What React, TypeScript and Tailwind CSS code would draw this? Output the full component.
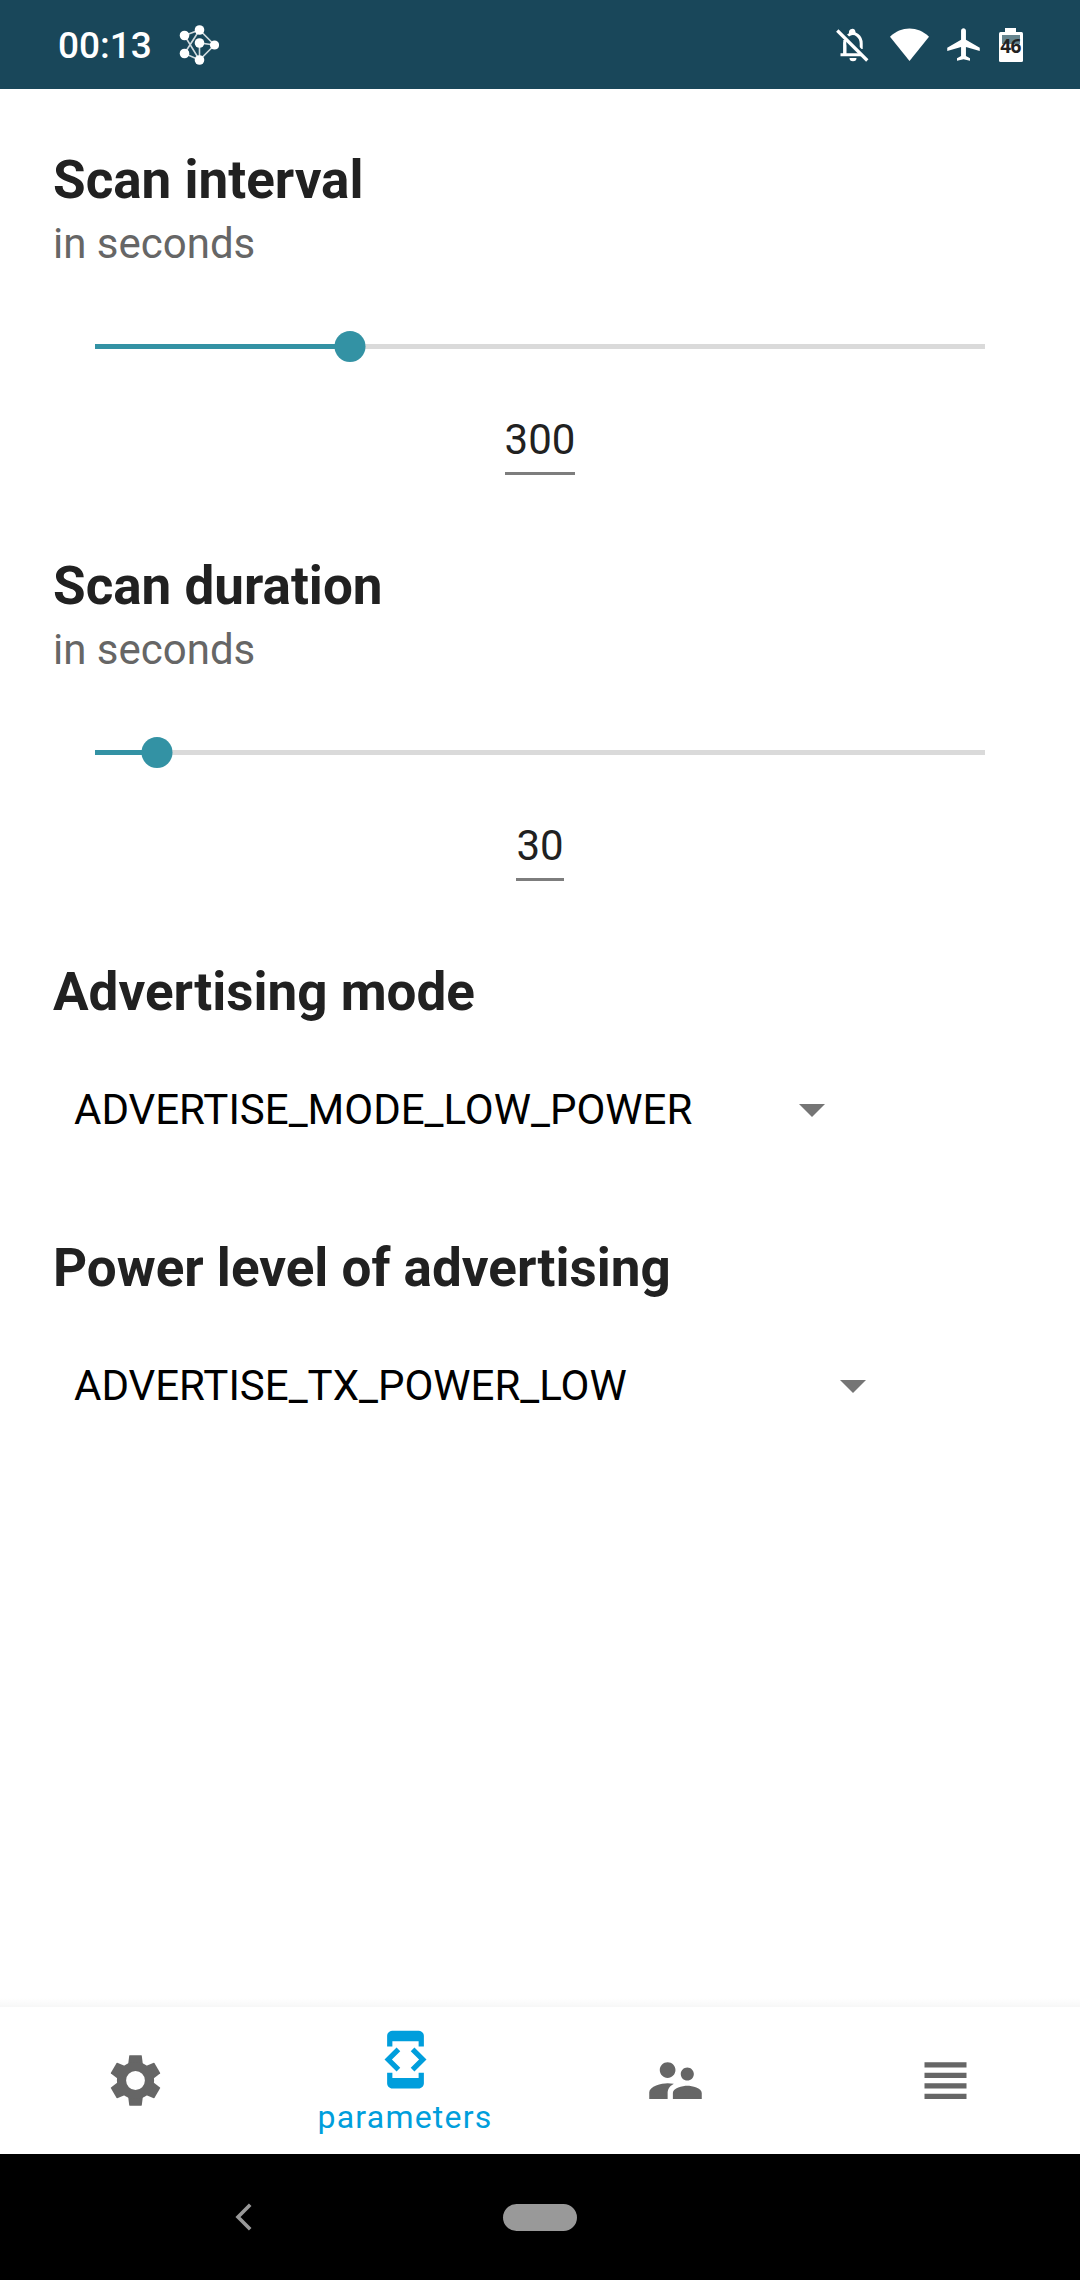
import React from "react";

function NetworkIcon() {
  return (
    <svg className="ml-[27px] h-[40px] w-[40px]" viewBox="0 0 40 40">
      <path
        d="M5.5 10.5 20.5 5 35.5 20 20.5 35 5.5 28.500 20.5 5M5.500 10.500 20.500 35V18L35.500 20"
        stroke="white"
        strokeOpacity="0.8"
        strokeWidth="1.6"
        fill="none"
      />
      <g fill="white">
        <circle cx="20.500" cy="5" r="4.800" />
        <circle cx="5.500" cy="10.500" r="4.800" />
        <circle cx="20.500" cy="18" r="4.800" />
        <circle cx="35.500" cy="20" r="4.600" />
        <circle cx="5.500" cy="28.500" r="4.800" />
        <circle cx="20.500" cy="35" r="4.800" />
      </g>
    </svg>
  );
}

function StatusBar() {
  return (
    <header className="flex h-[89px] shrink-0 items-center bg-[#19475a] pl-[58px] pr-[57px] text-white">
      <span className="pt-[2px] text-[37px] font-medium leading-none">00:13</span>
      <NetworkIcon />
      <div className="ml-auto flex h-[36px] items-center">
        <svg className="h-[36px] w-[36px]" viewBox="0 0 36 36" fill="none" stroke="white">
          <path d="M10.800 28V16.500C10.800 12.500 12.500 9 15.500 7.500C21 4.500 27.200 9.500 27.200 16.500V22" strokeWidth="3" />
          <path d="M3.500 3.500 33 33" stroke="#19475a" strokeWidth="8" />
          <path d="M10.800 13V27.500M6.500 27.800H27" strokeWidth="3" />
          <path d="M3.300 3.500 33.300 33.500" strokeWidth="3.300" />
          <path d="M15.500 31H22.500A3.500 3.300 0 0 1 15.500 31ZM15 6.500A3 3.500 0 0 1 21.500 5V7Z" fill="white" stroke="none" />
        </svg>
        <svg className="ml-[20px] h-[36px] w-[39px]" viewBox="0 0 39 36">
          <path d="M0 9.800C11 -1.300 28 -1.300 39 9.800L19.500 34Z" fill="white" />
        </svg>
        <svg className="ml-[15px] h-[39px] w-[39px]" viewBox="0 0 24 24">
          <path d="M22 16v-2l-8.500-5V3.500c0-.83-.67-1.500-1.500-1.500s-1.500.67-1.500 1.500V9L2 14v2l8.500-2.500V19L8 20.500V22l4-1 4 1v-1.500L13.500 19v-5.500L22 16z" fill="white" />
        </svg>
        <div className="ml-[15px] flex h-[34px] w-[25px] flex-col items-center">
          <div className="h-[4px] w-[11px] bg-white" />
          <div className="relative h-[30px] w-[24px] rounded-[1.500px] bg-white px-[3px] pt-[3px]">
            <div className="h-[9px] bg-[#66858f]" />
            <span className="absolute left-0 top-[4px] w-full text-center font-['Noto_Sans'] text-[19px] font-bold leading-[20px] tracking-[-0.500px] text-[#222222]">
              46
            </span>
          </div>
        </div>
      </div>
    </header>
  );
}

function Title({ children }: { children: string }) {
  return <h2 className="text-[53px] font-bold leading-[62px] text-[#212121]">{children}</h2>;
}

function SliderSection({ title, value, percent }: { title: string; value: string; percent: number }) {
  return (
    <section className="flex h-[406px] flex-col">
      <Title>{title}</Title>
      <p className="mt-[8px] text-[42px] leading-[50px] text-[#666666]">in seconds</p>
      <div className="relative mx-[42px] mt-[75px] h-[5px] bg-[#dadada]">
        <div className="h-full bg-[#3392a4]" style={{ width: `${percent}%` }} />
        <div
          className="absolute -top-[13px] h-[31px] w-[31px] -translate-x-1/2 rounded-full bg-[#3392a4]"
          style={{ left: `${percent}%` }}
        />
      </div>
      <div className="mt-[66px] h-[60px] self-center border-b-[3px] border-[#7d7d7d] text-[42px] leading-[50px] text-[#212121]">
        {value}
      </div>
    </section>
  );
}

function SelectSection({ title, value, gapClass }: { title: string; value: string; gapClass: string }) {
  return (
    <section className="h-[276px]">
      <Title>{title}</Title>
      <div className={`mt-[61px] flex h-[52px] items-center pl-[21px] ${gapClass}`}>
        <span className="whitespace-nowrap text-[42px] leading-[50px] text-black">{value}</span>
        <svg className="h-[13px] w-[26px]" viewBox="0 0 26 13">
          <path d="M0 0h26L13 13z" fill="#757575" />
        </svg>
      </div>
    </section>
  );
}

const TEETH = [0, 60, 120, 180, 240, 300];

function GearIcon() {
  return (
    <svg className="h-[63px] w-[63px]" viewBox="-31.500 -31.500 63 63">
      {TEETH.map((angle) => (
        <path key={angle} d="M-5.800 -25.200H5.800L6.300 -24.700 7.500 -15H-7.500L-6.300 -24.700Z" fill="#666666" transform={`rotate(${angle})`} />
      ))}
      <circle r="14" fill="none" stroke="#666666" strokeWidth="9.200" />
    </svg>
  );
}

function BottomNav() {
  return (
    <nav className="grid h-[147px] shrink-0 grid-cols-4 bg-white">
      <div className="flex items-center justify-center">
        <GearIcon />
      </div>
      <div className="flex flex-col items-center pt-[21px] text-[#009edc]">
        <svg className="h-[63px] w-[63px]" viewBox="0 0 24 24" fill="currentColor">
          <path d="M7 5h10v2h2V3c0-1.100-.9-1.990-2-1.990L7 1c-1.100 0-2 .9-2 2v4h2V5zm8.410 11.590L20 12l-4.590-4.590L14 8.830 17.170 12 14 15.170l1.410 1.420zM10 15.170L6.830 12 10 8.830 8.590 7.410 4 12l4.590 4.590L10 15.170zM17 19H7v-2H5v4c0 1.100.9 2 2 2h10c1.100 0 2-.9 2-2v-4h-2v2z" />
        </svg>
        <span className="mt-[7px] text-[32px] leading-[38px] tracking-[1.200px]">parameters</span>
      </div>
      <div className="flex items-center justify-center text-[#666666]">
        <svg className="h-[63px] w-[63px]" viewBox="0 0 24 24" fill="currentColor">
          <path d="M16.500 12c1.380 0 2.490-1.120 2.490-2.500S17.880 7 16.500 7C15.120 7 14 8.120 14 9.500s1.120 2.500 2.500 2.500zM9 11c1.660 0 2.990-1.340 2.990-3S10.660 5 9 5C7.340 5 6 6.340 6 8s1.340 3 3 3zm7.500 3c-1.830 0-5.500.92-5.500 2.750V19h11v-2.250c0-1.830-3.670-2.750-5.500-2.750zM9 13c-2.330 0-7 1.170-7 3.500V19h7v-2.250c0-.85.33-2.340 2.370-3.470C10.500 13.100 9.660 13 9 13z" />
        </svg>
      </div>
      <div className="flex items-center justify-center text-[#666666]">
        <svg className="h-[63px] w-[63px]" viewBox="0 0 24 24" fill="currentColor">
          <path d="M4 15h16v-2H4v2zm0 4h16v-2H4v2zm0-8h16V9H4v2zm0-6v2h16V5H4z" />
        </svg>
      </div>
    </nav>
  );
}

function SystemBar() {
  return (
    <footer className="flex h-[126px] shrink-0 items-center bg-black pl-[235px]">
      <svg className="h-[28px] w-[18px]" viewBox="0 0 18 28" fill="none" stroke="#999999" strokeWidth="3.600">
        <path d="M15.200 1.800 3 14 15.200 26.200" />
      </svg>
      <div className="ml-[250px] h-[27px] w-[74px] rounded-full bg-[#999999]" />
    </footer>
  );
}

export default function App() {
  return (
    <div className="flex h-[2280px] w-[1080px] flex-col bg-white font-['Roboto',sans-serif]">
      <StatusBar />
      <main className="flex-1 px-[53px] pt-[60px]">
        <SliderSection title="Scan interval" value="300" percent={28.6} />
        <SliderSection title="Scan duration" value="30" percent={7} />
        <SelectSection title="Advertising mode" value="ADVERTISE_MODE_LOW_POWER" gapClass="gap-[107px]" />
        <SelectSection title="Power level of advertising" value="ADVERTISE_TX_POWER_LOW" gapClass="gap-[213px]" />
      </main>
      <div className="h-[9px] shrink-0 bg-linear-to-b from-white to-[#f7f7f7]" />
      <BottomNav />
      <SystemBar />
    </div>
  );
}
